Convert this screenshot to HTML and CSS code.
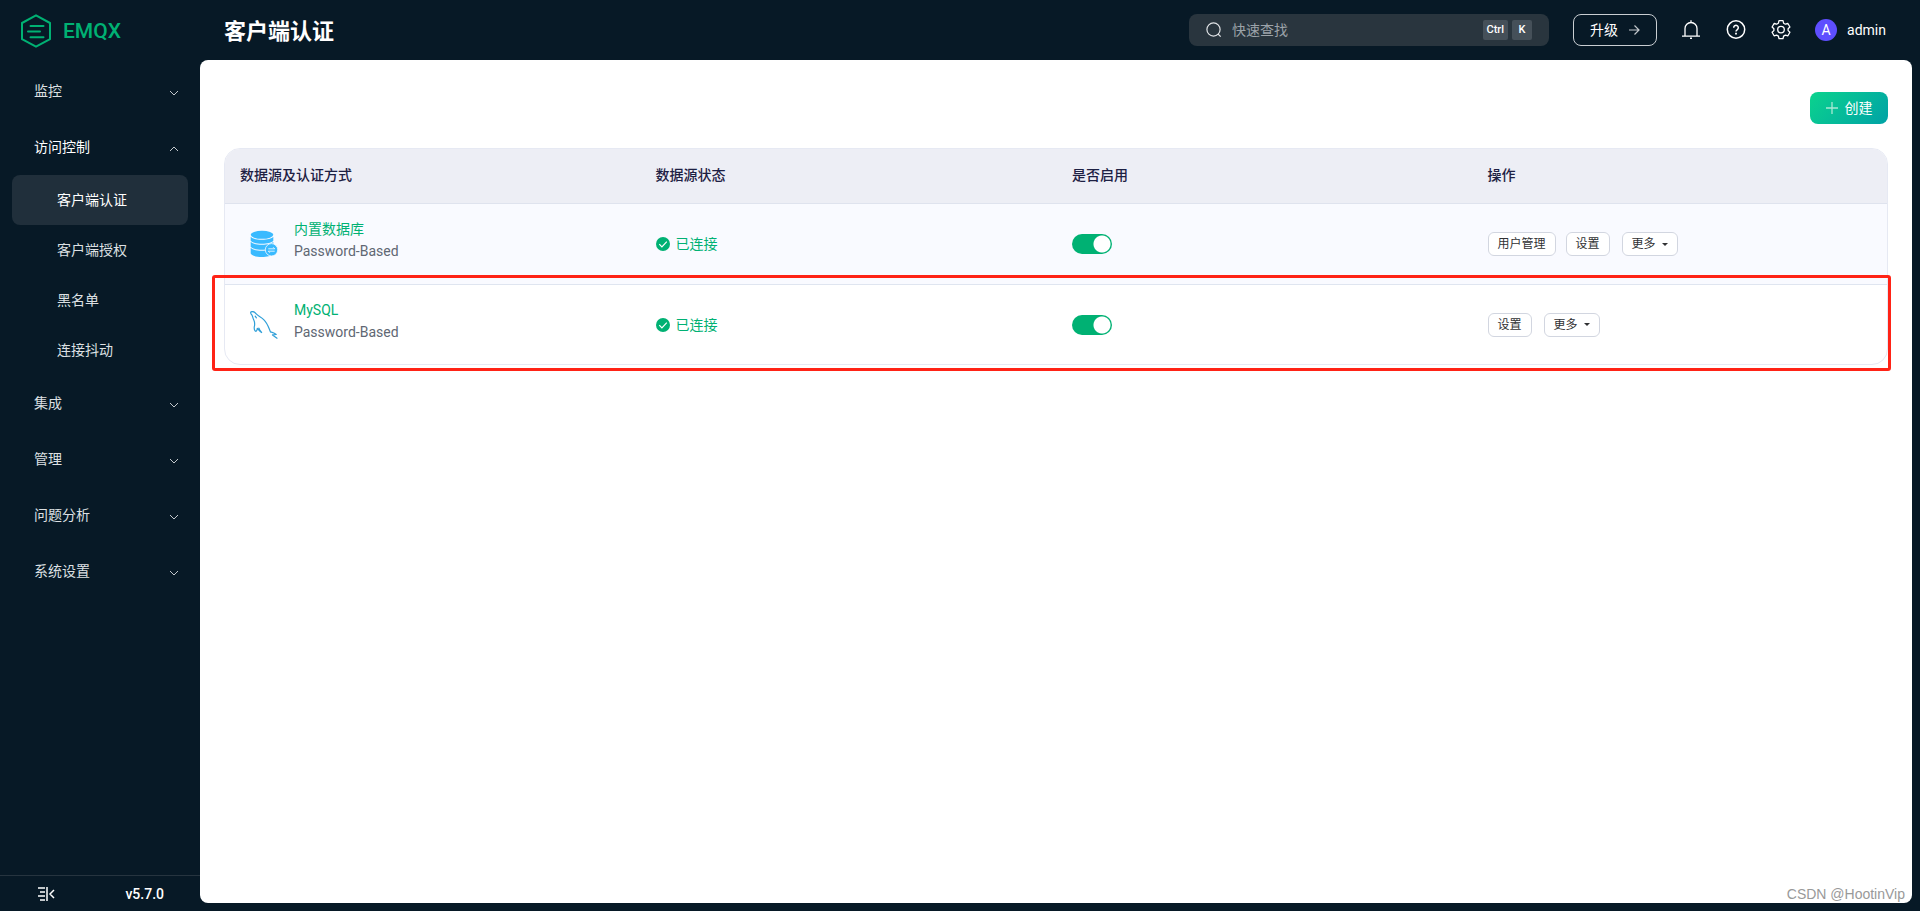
FILE: index.html
```html
<!DOCTYPE html>
<html lang="zh-CN">
<head>
<meta charset="utf-8">
<title>客户端认证</title>
<link rel="stylesheet" href="styles.css">
</head>
<body>
<div class="app">
  <aside class="sidebar">
    <div class="brand">
      <svg class="brand-mark" viewBox="0 0 32 34" width="32" height="34" fill="none" stroke="#00b173" stroke-width="2" stroke-linejoin="round" stroke-linecap="round"><path d="M16 1.300 30 9v16.200L16 32.700 2 25.200V9z"/><path d="M10.500 12h13M8 17.500h12M10.500 23.200h13"/></svg>
      <span class="brand-name">EMQX</span>
    </div>
    <nav class="menu">
      <button class="menu-group">监控<svg class="chevron" viewBox="0 0 10 6" width="10" height="6"><path d="M1 1l4 4 4-4"/></svg></button>
      <button class="menu-group open">访问控制<svg class="chevron" viewBox="0 0 10 6" width="10" height="6"><path d="M1 5l4-4 4 4"/></svg></button>
      <a class="menu-item active" href="#">客户端认证</a>
      <a class="menu-item" href="#">客户端授权</a>
      <a class="menu-item" href="#">黑名单</a>
      <a class="menu-item" href="#">连接抖动</a>
      <button class="menu-group">集成<svg class="chevron" viewBox="0 0 10 6" width="10" height="6"><path d="M1 1l4 4 4-4"/></svg></button>
      <button class="menu-group">管理<svg class="chevron" viewBox="0 0 10 6" width="10" height="6"><path d="M1 1l4 4 4-4"/></svg></button>
      <button class="menu-group">问题分析<svg class="chevron" viewBox="0 0 10 6" width="10" height="6"><path d="M1 1l4 4 4-4"/></svg></button>
      <button class="menu-group">系统设置<svg class="chevron" viewBox="0 0 10 6" width="10" height="6"><path d="M1 1l4 4 4-4"/></svg></button>
    </nav>
    <div class="sidebar-foot">
      <button class="icon-button" aria-label="收起菜单"><svg viewBox="0 0 18 16" width="18" height="16" fill="none" stroke="#fff" stroke-width="1.500"><path d="M1 2h7M3 6h5M1 10h7M3 14h5M10 1v14M17 4l-4 4 4 4"/></svg></button>
      <span class="version">v5.7.0</span>
    </div>
  </aside>
  <div class="page">
    <header class="topbar">
      <h1 class="title">客户端认证</h1>
      <label class="search">
        <svg viewBox="0 0 16 16" width="16" height="16" fill="none" stroke="#e0e3e6" stroke-width="1.200"><circle cx="7.500" cy="7.500" r="6.600"/><path d="M12 12l2.700 2.700"/></svg>
        <input class="search-input" type="text" placeholder="快速查找" aria-label="快速查找">
        <kbd class="key">Ctrl</kbd><kbd class="key">K</kbd>
      </label>
      <button class="upgrade">升级<svg viewBox="0 0 12 12" width="12" height="12" fill="none" stroke="#c3c8cc" stroke-width="1.200"><path d="M1 6h10M6.500 1.500 11 6l-4.500 4.500"/></svg></button>
      <div class="tools">
        <button class="icon-button" aria-label="通知"><svg viewBox="0 0 20 20" width="20" height="20" fill="none" stroke="#fff" stroke-width="1.300"><path d="M1 16.200h18M4 16.200V8.500a6 6 0 0 1 12 0v7.700M10 2.500V.3"/><path d="M9 18.300h2" stroke-width="1.600"/></svg></button>
        <button class="icon-button" aria-label="帮助"><svg viewBox="0 0 20 20" width="20" height="20" fill="none" stroke="#fff" stroke-width="1.500"><circle cx="10" cy="9.500" r="8.700"/><path d="M7.700 7.700a2.300 2.300 0 1 1 3.600 1.900c-.9.600-1.300 1-1.300 2"/><path d="M10 12.700v1.800" stroke-width="1.800"/></svg></button>
        <button class="icon-button" aria-label="设置"><svg viewBox="0 0 20 20" width="20" height="20" fill="none" stroke="#fff" stroke-width="1.300" stroke-linejoin="round"><path d="M8 .7h4l.6 2.500 1.800 1 2.500-.7 2 3.500-1.800 1.700v1.900l1.800 1.700-2 3.500-2.500-.7-1.800 1-.6 2.500H8l-.6-2.500-1.800-1-2.500.7-2-3.500 1.800-1.700V8.700L1.100 7l2-3.500 2.500.7 1.800-1z"/><circle cx="10" cy="9.600" r="3.300"/></svg></button>
      </div>
      <button class="user"><span class="avatar">A</span>admin</button>
    </header>
    <main class="content">
      <div class="actions">
        <button class="create"><svg viewBox="0 0 12 12" width="12" height="12" stroke="#a8e8d4" stroke-width="1.300"><path d="M0 6h12M6 0v12"/></svg>创建</button>
      </div>
      <div class="table-area">
        <table class="table">
          <thead>
            <tr><th scope="col">数据源及认证方式</th><th scope="col">数据源状态</th><th scope="col">是否启用</th><th scope="col">操作</th></tr>
          </thead>
          <tbody>
            <tr class="striped">
              <td><div class="source">
                <svg viewBox="0 0 28 28" width="28" height="28"><g fill="#3abaff"><ellipse cx="12" cy="4.800" rx="11.300" ry="4"/><path d="M.7 6.800c1.500 2.100 6 3 11.300 3s9.800-.9 11.300-3v4c-1.500 2.100-6 3-11.300 3s-9.800-.9-11.300-3z"/><path d="M.7 11.800c1.500 2.100 6 3 11.300 3s9.800-.9 11.300-3v5c-1.500 2.100-6 3-11.300 3s-9.800-.9-11.300-3z"/><path d="M.7 17.800c1.500 2.100 6 3 11.300 3s9.800-.9 11.300-3v5.700c-1.500 2.500-6 3.500-11.300 3.500s-9.800-1-11.300-3.500z"/><circle cx="21.500" cy="19.800" r="6.200" stroke="#f9faff" stroke-width=".8"/></g><path d="M18.300 18.800h6.400l-1.500-1.500M24.700 21.200h-6.400l1.500 1.500" fill="none" stroke="#fff" stroke-width=".8"/></svg>
                <div class="source-text"><a class="link" href="#">内置数据库</a><div class="kind">Password-Based</div></div>
              </div></td>
              <td><span class="status"><svg viewBox="0 0 14 14" width="14" height="14"><circle cx="7" cy="7" r="7" fill="#00b173"/><path d="M3.300 7.200l2.600 2.600 4.900-5.100" fill="none" stroke="#fff" stroke-width="1.200"/></svg>已连接</span></td>
              <td><input class="switch" type="checkbox" checked aria-label="启用内置数据库"></td>
              <td><div class="ops"><button class="small">用户管理</button><button class="small">设置</button><button class="small more">更多<span class="caret"></span></button></div></td>
            </tr>
            <tr>
              <td><div class="source">
                <svg viewBox="0 0 28 28" width="28" height="28" fill="none" stroke="#2f9fd8" stroke-width="1.200" stroke-linejoin="round" stroke-linecap="round"><path d="M27 27.200l-4.500-3.300 3.700-.4c-1.600-1.500-3.500-1.900-5.700-2.600-1.600-3.300-2.600-8.300-6.800-12.300C11 6 8.200 5 6.500 3.200 4.600.8 2.300.2 1 .9.200 1.600 1 3 1.900 4c1 1.600.8 3 1.900 5 .8 1.700 1 3.500.8 5.300-.6 2.100-.4 4.600.7 5.800 1.300.9 1.800-1.400 2-2.800 1.200 1.400 2.500 3.300 4.300 4.200-1.400-1.500-2.400-2.800-2.700-4.300"/><path d="M5.200 5.200l1.200 1.600"/></svg>
                <div class="source-text"><a class="link" href="#">MySQL</a><div class="kind">Password-Based</div></div>
              </div></td>
              <td><span class="status"><svg viewBox="0 0 14 14" width="14" height="14"><circle cx="7" cy="7" r="7" fill="#00b173"/><path d="M3.300 7.200l2.600 2.600 4.900-5.100" fill="none" stroke="#fff" stroke-width="1.200"/></svg>已连接</span></td>
              <td><input class="switch" type="checkbox" checked aria-label="启用 MySQL"></td>
              <td><div class="ops"><button class="small">设置</button><button class="small more">更多<span class="caret"></span></button></div></td>
            </tr>
          </tbody>
        </table>
        <div class="highlight"></div>
      </div>
      <div class="watermark">CSDN @HootinVip</div>
    </main>
  </div>
</div>
</body>
</html>
```
FILE: styles.css
```css
* { box-sizing: border-box; }
body {
  margin: 0;
  background: #071926;
  color: #fff;
  font: 14px/22px Roboto, "Noto Sans CJK SC", sans-serif;
}
button, input {
  font: inherit;
  color: inherit;
  border: 0;
  background: none;
  padding: 0;
  margin: 0;
}
a { text-decoration: none; color: inherit; }
svg { flex: none; display: block; }

.app { display: flex; min-height: 100vh; }

/* Sidebar */
.sidebar { width: 200px; flex: none; display: flex; flex-direction: column; }
.brand { height: 63px; padding: 0 0 2px 20px; display: flex; align-items: center; gap: 11px; }
.brand-name { font-size: 21px; line-height: 32px; font-weight: 500; color: #00b173; }
.menu { flex: 1; display: flex; flex-direction: column; }
.menu-group {
  height: 56px;
  padding: 0 21px 0 34px;
  display: flex;
  align-items: center;
  justify-content: space-between;
  color: #dde0e3;
}
.menu-group.open { color: #fff; }
.chevron { fill: none; stroke: #c3c8cc; stroke-width: 1; margin-top: 4px; }
.menu-item {
  height: 50px;
  margin: 0 12px;
  padding-left: 45px;
  display: flex;
  align-items: center;
  border-radius: 8px;
  color: #dde0e3;
}
.menu-item.active { background: #202f3b; color: #fff; }
.sidebar-foot {
  height: 36px;
  border-top: 1px solid #26343f;
  display: flex;
  align-items: center;
  justify-content: space-between;
  padding: 0 36px 0 37px;
}
.version { font-weight: 500; }

/* Header */
.page { flex: 1; min-width: 0; display: flex; flex-direction: column; padding: 0 8px 8px 0; }
.topbar { height: 60px; display: flex; align-items: center; padding: 0 26px 0 24px; }
.title { margin: 0 auto 0 0; padding-top: 4px; font-size: 22px; line-height: 32px; font-weight: 700; }
.search {
  width: 360px;
  height: 32px;
  padding: 0 17px;
  border-radius: 8px;
  background: #29353e;
  display: flex;
  align-items: center;
  gap: 4px;
}
.search-input { flex: 1; min-width: 0; margin-left: 6px; outline: 0; }
.search-input::placeholder { color: #9ca3a9; opacity: 1; }
.key {
  height: 20px;
  min-width: 20px;
  padding: 0 4px;
  border-radius: 2px;
  background: #455059;
  font: 500 11px/20px Roboto, sans-serif;
  text-align: center;
}
.upgrade {
  width: 84px;
  height: 32px;
  margin-left: 24px;
  border: 1px solid #c9ced2;
  border-radius: 8px;
  display: flex;
  align-items: center;
  justify-content: center;
  gap: 10px;
}
.tools { display: flex; gap: 25px; margin: 0 24px; }
.user { display: flex; align-items: center; gap: 10px; }
.avatar { width: 22px; height: 22px; border-radius: 50%; background: #5e4eff; text-align: center; }

/* Content */
.content {
  position: relative;
  flex: 1;
  padding: 32px 24px;
  border-radius: 8px;
  background: #fff;
  color: #303133;
}
.actions { display: flex; justify-content: flex-end; margin-bottom: 24px; }
.create {
  width: 78px;
  height: 32px;
  border-radius: 8px;
  background: linear-gradient(133deg, #0bd38d, #00a2a6);
  color: #fff;
  display: flex;
  align-items: center;
  justify-content: center;
  gap: 7px;
}
.table-area { position: relative; }
.table {
  width: 100%;
  table-layout: fixed;
  border: 1px solid #e6e9f3;
  border-radius: 16px;
  border-spacing: 0;
  overflow: hidden;
}
.table th, .table td { padding: 0 15px; text-align: left; }
.table th {
  height: 55px;
  padding-bottom: 2px;
  background: #edeef5;
  border-bottom: 1px solid #dfe3ee;
  color: #1d2043;
  font-weight: 500;
}
.table th:nth-child(n+3), .table td:nth-child(n+3) { padding-left: 16px; }
.table td { height: 79px; }
.table .striped td { height: 81px; background: #f9faff; border-bottom: 1px solid #dfe5f0; }
.source { display: flex; align-items: center; gap: 16px; padding-left: 10px; }
.source-text { margin-bottom: 8px; }
.source .link { display: block; }
.link { color: #00b173; }
.kind { color: #606773; }
.status { display: flex; align-items: center; gap: 6px; color: #00b173; }
.switch {
  appearance: none;
  display: block;
  width: 40px;
  height: 20px;
  border-radius: 10px;
  background: radial-gradient(circle at 30px 10px, #fff 8px, #00b173 9px);
}
.ops { display: flex; gap: 10px; }
.small {
  height: 24px;
  padding: 0 9px;
  border: 1px solid #d2d6e0;
  border-radius: 6px;
  background: #fff;
  color: #303133;
  font-size: 12px;
  line-height: 20px;
}
.more { display: flex; align-items: center; gap: 6px; margin-left: 2px; }
.caret { border: 3px solid transparent; border-top-color: #303133; border-bottom: 0; }
.highlight {
  position: absolute;
  left: -12px;
  right: -3px;
  bottom: -6px;
  height: 96px;
  border: 3px solid #ff2316;
  border-radius: 3px;
  pointer-events: none;
}
.watermark {
  position: absolute;
  right: 7px;
  bottom: -1px;
  font: 14px/20px "Liberation Sans", sans-serif;
  color: #999;
}
```
